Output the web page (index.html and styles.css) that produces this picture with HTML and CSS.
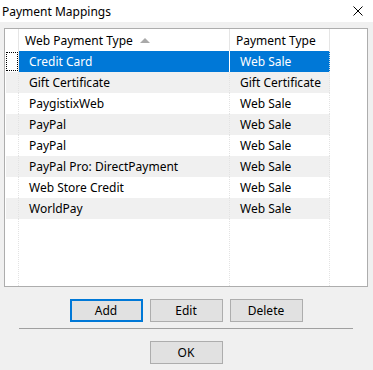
FILE: index.html
```html
<!DOCTYPE html>
<html lang="en">
<head>
  <meta charset="UTF-8" />
  <title>Payment Mappings</title>
  <link rel="stylesheet" href="styles.css">
</head>
<body>

  <!-- Title bar -->
  <div class="titlebar">
    <span class="title">Payment Mappings</span>
    <svg class="close" width="10" height="10" viewBox="0 0 10 10">
      <path d="M0.5 0.5 L9.5 9.5 M9.5 0.5 L0.5 9.5" stroke="#000" stroke-width="1" fill="none"/>
    </svg>
  </div>

  <div class="dialog">
    <!-- Mappings grid -->
    <div class="grid">
      <div class="row head">
        <div class="cell rh"></div>
        <div class="cell c1">Web Payment Type <span class="sort"></span></div>
        <div class="cell c2">Payment Type</div>
      </div>
      <div id="rows"></div>
      <div class="row filler">
        <div class="cell rh"></div>
        <div class="cell c1"></div>
        <div class="cell c2"></div>
      </div>
    </div>

    <div class="buttons">
      <button class="btn default">Add</button>
      <button class="btn">Edit</button>
      <button class="btn">Delete</button>
    </div>

    <hr class="sep">

    <div class="buttons">
      <button class="btn">OK</button>
    </div>
  </div>

  <script>
    const mappings = [
      ["Credit Card", "Web Sale"],
      ["Gift Certificate", "Gift Certificate"],
      ["PaygistixWeb", "Web Sale"],
      ["PayPal", "Web Sale"],
      ["PayPal", "Web Sale"],
      ["PayPal Pro: DirectPayment", "Web Sale"],
      ["Web Store Credit", "Web Sale"],
      ["WorldPay", "Web Sale"]
    ];

    let html = "";
    mappings.forEach(function(m, i) {
      let cls = "row";
      if (i === 0) cls += " selected";
      else if (i % 2 === 1) cls += " alt";
      html += `
        <div class="${cls}">
          <div class="cell rh">${i === 0 ? '<span class="focus"></span>' : ''}</div>
          <div class="cell c1">${m[0]}</div>
          <div class="cell c2">${m[1]}</div>
        </div>
      `;
    });
    document.getElementById("rows").innerHTML = html;
  </script>

</body>
</html>
```

FILE: styles.css
```css
* {
  box-sizing: border-box;
}
body {
  margin: 0;
  width: 373px;
  height: 370px;
  background: #f0f0f0;
  font-family: "Noto Sans", sans-serif;
  font-size: 12px;
  color: #000;
  overflow: hidden;
}
.titlebar {
  height: 22px;
  background: #fff;
  display: flex;
  align-items: center;
  justify-content: space-between;
  padding: 0 10px 0 2px;
}
.close {
  display: block;
}
.dialog {
  padding: 6px 5px 0 4px;
}
.grid {
  height: 259px;
  border: 1px solid #adadad;
  background: #fff;
  display: flex;
  flex-direction: column;
}
.row {
  display: grid;
  grid-template-columns: 14px 211px 100px;
  height: 21px;
}
.cell {
  display: flex;
  align-items: center;
  border-right: 1px dotted #e3e3e3;
  white-space: nowrap;
}
.head {
  height: 22px;
}
.head .cell {
  border-right: 1px solid #e5e5e5;
}
.head .c1 {
  padding-left: 6px;
}
.head .c2 {
  padding-left: 6px;
}
.c1 {
  padding-left: 10px;
}
.c2 {
  padding-left: 10px;
}
.sort {
  width: 0;
  height: 0;
  margin-left: 7px;
  border-left: 5px solid transparent;
  border-right: 5px solid transparent;
  border-bottom: 5px solid #a9a9a9;
}
.alt .cell {
  background: #f0f0f0;
}
.alt .rh {
  border-left: 1px solid #fff;
}
.selected .c1,
.selected .c2 {
  background: #0078d7;
  color: #fff;
}
.selected .c1 {
  border-right: 1px solid #fff;
}
.focus {
  display: block;
  width: 12px;
  height: 19px;
  margin-left: 1px;
  border: 1px dotted #000;
}
.filler {
  flex: 1;
}
.buttons {
  display: flex;
  justify-content: center;
  gap: 7px;
  margin-top: 12px;
}
.btn {
  width: 73px;
  height: 23px;
  background: #e1e1e1;
  border: 1px solid #adadad;
  font-family: inherit;
  font-size: 12px;
  color: #000;
  padding: 0;
}
.btn.default {
  border: 2px solid #0078d7;
}
.sep {
  margin: 6px 15px 0 15px;
  border: none;
  border-top: 1px solid #a0a0a0;
  height: 0;
}
```
